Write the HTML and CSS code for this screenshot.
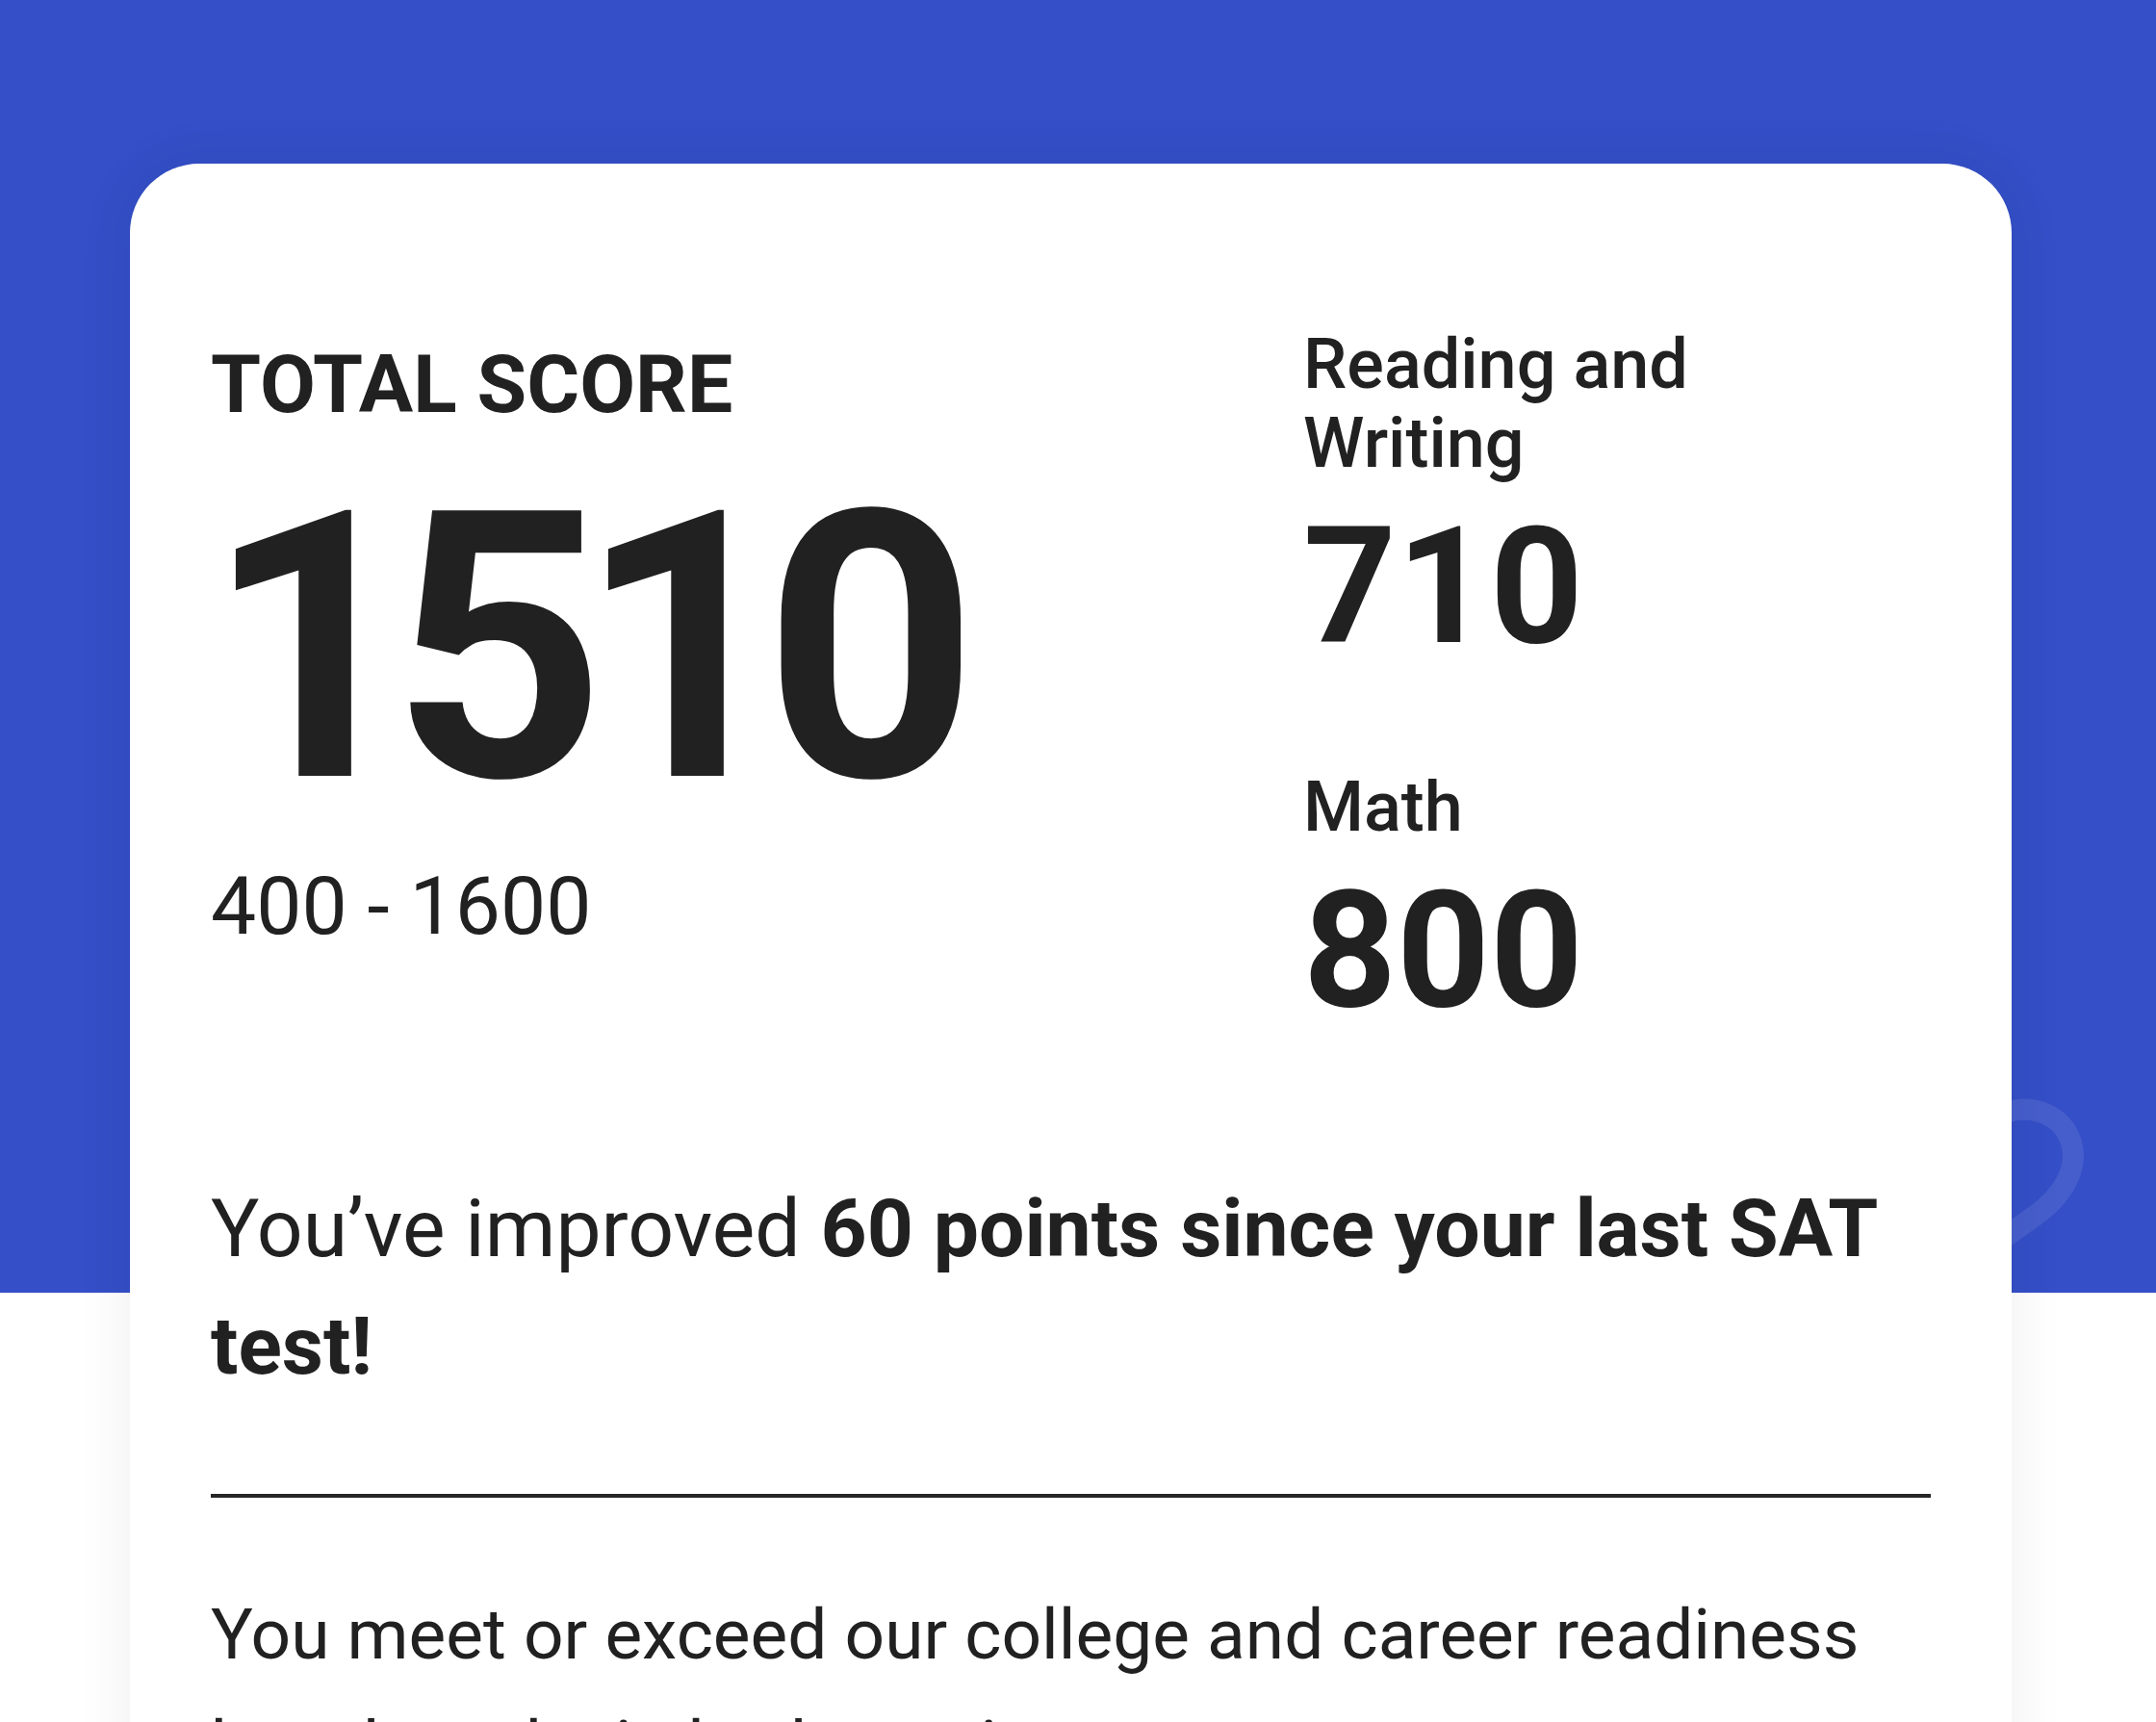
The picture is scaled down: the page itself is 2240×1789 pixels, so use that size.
FILE: index.html
```html
<!DOCTYPE html>
<html lang="en">
<head>
    <meta charset="UTF-8">
    <meta name="viewport" content="width=device-width, initial-scale=1.0">
    <title>SAT Score Report</title>
    <link rel="stylesheet" href="styles.css">
</head>
<body>
    <div class="page">
        <svg class="decor-heart" viewBox="0 0 220 220" aria-hidden="true">
            <path d="M100 60 C100 20 160 8 186 44 C206 76 186 112 150 136 L80 186"></path>
        </svg>

        <div class="score-card">
            <div class="score-grid">
                <div class="total">
                    <h2 class="total-label">TOTAL SCORE</h2>
                    <div class="total-value">1510</div>
                    <div class="total-range">400 - 1600</div>
                </div>
                <div class="sections">
                    <div class="section">
                        <div class="section-label">Reading and<br>Writing</div>
                        <div class="section-value">710</div>
                    </div>
                    <div class="section">
                        <div class="section-label">Math</div>
                        <div class="section-value">800</div>
                    </div>
                </div>
            </div>

            <p class="improvement">You’ve improved <strong>60 points since your last SAT test!</strong></p>
            <hr class="divider">
            <p class="readiness">You meet or exceed our college and career readiness benchmarks in both sections.</p>
        </div>
    </div>
</body>
</html>
```

FILE: styles.css
```css
body {
    margin: 0;
    font-family: Roboto, "Noto Sans", Arial, sans-serif;
    color: #212121;
    background-color: #fff;
}
.page {
    position: relative;
    padding: 170px 150px 0 135px;
    background: linear-gradient(to bottom, #344fc7 0, #344fc7 1343px, #fff 1343px);
    overflow: hidden;
}
.decor-heart {
    position: absolute;
    left: 1960px;
    top: 1130px;
    width: 220px;
    height: 220px;
    fill: none;
    stroke: rgba(255, 255, 255, 0.09);
    stroke-width: 22;
    stroke-linecap: round;
}
.score-card {
    position: relative;
    background-color: #fff;
    border-radius: 72px 72px 0 0;
    padding: 168px 84px 120px;
    box-shadow: 0 0 60px rgba(0, 0, 0, 0.07);
}
.score-grid {
    display: grid;
    grid-template-columns: 1135px 1fr;
}
.total {
    margin-top: 12px;
}
.total-label {
    margin: 0;
    font-size: 84px;
    line-height: 100px;
    font-weight: 700;
}
.total-value {
    margin-top: 30px;
    margin-left: -6px;
    font-size: 388px;
    line-height: 320px;
    padding: 34px 0;
    font-weight: 700;
    letter-spacing: -0.075em;
}
.total-range {
    margin-top: 24px;
    font-size: 84px;
    line-height: 100px;
}
.section + .section {
    margin-top: 104px;
}
.section-label {
    font-size: 72px;
    line-height: 82px;
    font-weight: 500;
}
.section-value {
    margin-top: 23px;
    font-size: 169px;
    line-height: 169px;
    font-weight: 700;
}
.improvement {
    margin: 144px 0 0;
    font-size: 84px;
    line-height: 122px;
}
.improvement strong {
    font-weight: 700;
}
.divider {
    margin: 92px 0 0;
    border: 0;
    height: 4px;
    background-color: #262626;
}
.readiness {
    margin: 84px 0 0;
    font-size: 73px;
    line-height: 116px;
}
```
